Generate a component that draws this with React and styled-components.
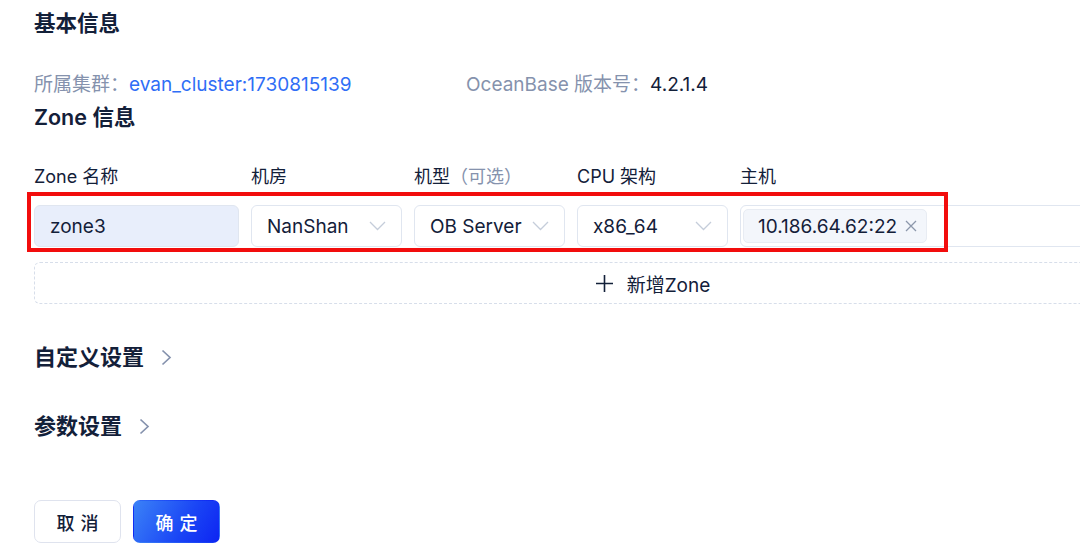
import styled, { createGlobalStyle } from "styled-components";

const GlobalStyle = createGlobalStyle`
  html, body {
    margin: 0;
    padding: 0;
    background: #ffffff;
    overflow: hidden;
  }
  body {
    font-family: "Inter", "Noto Sans CJK SC", sans-serif;
    color: #132039;
  }
`;

const Page = styled.div`
  width: 1238px;
  padding: 9px 0 0 34px;
`;

const SectionTitle = styled.h2`
  margin: 0;
  font-size: 21.5px;
  line-height: 28px;
  font-weight: 600;
  color: #132039;
  margin-top: ${(props) => props.$top || 0}px;
`;

const InfoRow = styled.div`
  display: flex;
  margin-top: 36px;
  font-size: 19px;
  line-height: 24px;
`;

const InfoItem = styled.div`
  width: 432px;
`;

const InfoLabel = styled.span`
  color: #8592ad;
`;

const InfoLink = styled.a`
  color: #2f6ef6;
  text-decoration: none;
`;

const InfoValue = styled.span`
  color: #132039;
`;

const Grid = styled.div`
  display: grid;
  grid-template-columns: 205px 151px 151px 151px 1fr;
  column-gap: 12px;
`;

const LabelRow = styled(Grid)`
  margin-top: 34px;
  font-size: 18px;
  line-height: 24px;
  white-space: nowrap;
`;

const Optional = styled.span`
  color: #8592ad;
`;

const FieldRow = styled(Grid)`
  position: relative;
  margin-top: 16px;
`;

const Field = styled.div`
  box-sizing: border-box;
  height: 42px;
  display: flex;
  align-items: center;
  justify-content: space-between;
  padding: 0 ${(props) => (props.$tags ? "3px" : "15px")} 0 ${(props) => (props.$tags ? "2px" : "15px")};
  border: 1px solid #e0e6f0;
  border-radius: 6px;
  background: ${(props) => (props.$filled ? "#e8eefb" : "#ffffff")};
  font-size: 19px;
  color: #132039;
  white-space: nowrap;
`;

const Tag = styled.span`
  box-sizing: border-box;
  height: 34px;
  display: inline-flex;
  align-items: center;
  gap: 8px;
  padding: 0 9px 0 14px;
  background: #f3f6fb;
  border: 1px solid #e8ecf3;
  border-radius: 5px;
  font-size: 19px;
`;

const Highlight = styled.div`
  position: absolute;
  left: -7px;
  top: -13px;
  width: 921px;
  height: 60px;
  box-sizing: border-box;
  border: 4px solid #f20d0d;
  pointer-events: none;
`;

const AddButton = styled.button`
  box-sizing: border-box;
  width: 100%;
  height: 42px;
  margin-top: 15px;
  display: flex;
  align-items: center;
  justify-content: center;
  gap: 14px;
  border: 1px dashed #d7deea;
  border-radius: 6px;
  background: #ffffff;
  font-family: inherit;
  font-size: 19px;
  color: #132039;
`;

const Collapse = styled.div`
  display: flex;
  align-items: center;
  gap: 17px;
  margin-top: ${(props) => props.$top}px;
  font-size: 22px;
  line-height: 28px;
  font-weight: 600;
`;

const Actions = styled.div`
  display: flex;
  gap: 12px;
  margin-top: 60px;
`;

const Button = styled.button`
  box-sizing: border-box;
  width: 87px;
  height: 43px;
  border-radius: 7px;
  font-family: inherit;
  font-size: 18px;
  font-weight: 500;
  letter-spacing: 6px;
  text-indent: 6px;
  border: 1px solid ${(props) => (props.$primary ? "transparent" : "#dfe3ee")};
  color: ${(props) => (props.$primary ? "#ffffff" : "#132039")};
  background: ${(props) =>
    props.$primary
      ? "linear-gradient(120deg, #3b82f7 0%, #1a45f5 60%, #0d25f2 100%)"
      : "#ffffff"};
`;

const ChevronDown = () => (
  <svg width="17" height="10" viewBox="0 0 17 10" fill="none">
    <path d="M1 1l7.5 7.5L16 1" stroke="#c5cdda" strokeWidth="1.3" />
  </svg>
);

const ChevronRight = () => (
  <svg width="11" height="17" viewBox="0 0 11 17" fill="none">
    <path d="M1.5 1.5l7.5 7-7.5 7" stroke="#8592ad" strokeWidth="1.7" />
  </svg>
);

const Close = () => (
  <svg width="12" height="12" viewBox="0 0 12 12" fill="none">
    <path d="M1 1l10 10M11 1L1 11" stroke="#8c97ab" strokeWidth="1.3" />
  </svg>
);

const Plus = () => (
  <svg width="17" height="17" viewBox="0 0 17 17" fill="none">
    <path d="M8.5 0v17M0 8.5h17" stroke="#132039" strokeWidth="1.6" />
  </svg>
);

const App = () => {
  return (
    <>
      <GlobalStyle />
      <Page>
        <SectionTitle>基本信息</SectionTitle>
        <InfoRow>
          <InfoItem>
            <InfoLabel>所属集群：</InfoLabel>
            <InfoLink>evan_cluster:1730815139</InfoLink>
          </InfoItem>
          <InfoItem>
            <InfoLabel>OceanBase 版本号：</InfoLabel>
            <InfoValue>4.2.1.4</InfoValue>
          </InfoItem>
        </InfoRow>
        <SectionTitle $top={6}>Zone 信息</SectionTitle>
        <LabelRow>
          <span>Zone 名称</span>
          <span>机房</span>
          <span>
            机型<Optional>（可选）</Optional>
          </span>
          <span>CPU 架构</span>
          <span>主机</span>
        </LabelRow>
        <FieldRow>
          <Field $filled>zone3</Field>
          <Field>
            NanShan <ChevronDown />
          </Field>
          <Field>
            OB Server <ChevronDown />
          </Field>
          <Field>
            x86_64 <ChevronDown />
          </Field>
          <Field $tags>
            <Tag>
              10.186.64.62:22 <Close />
            </Tag>
          </Field>
          <Highlight />
        </FieldRow>
        <AddButton>
          <Plus />
          新增Zone
        </AddButton>
        <Collapse $top={39}>
          自定义设置 <ChevronRight />
        </Collapse>
        <Collapse $top={41}>
          参数设置 <ChevronRight />
        </Collapse>
        <Actions>
          <Button>取消</Button>
          <Button $primary>确定</Button>
        </Actions>
      </Page>
    </>
  );
};

export default App;
